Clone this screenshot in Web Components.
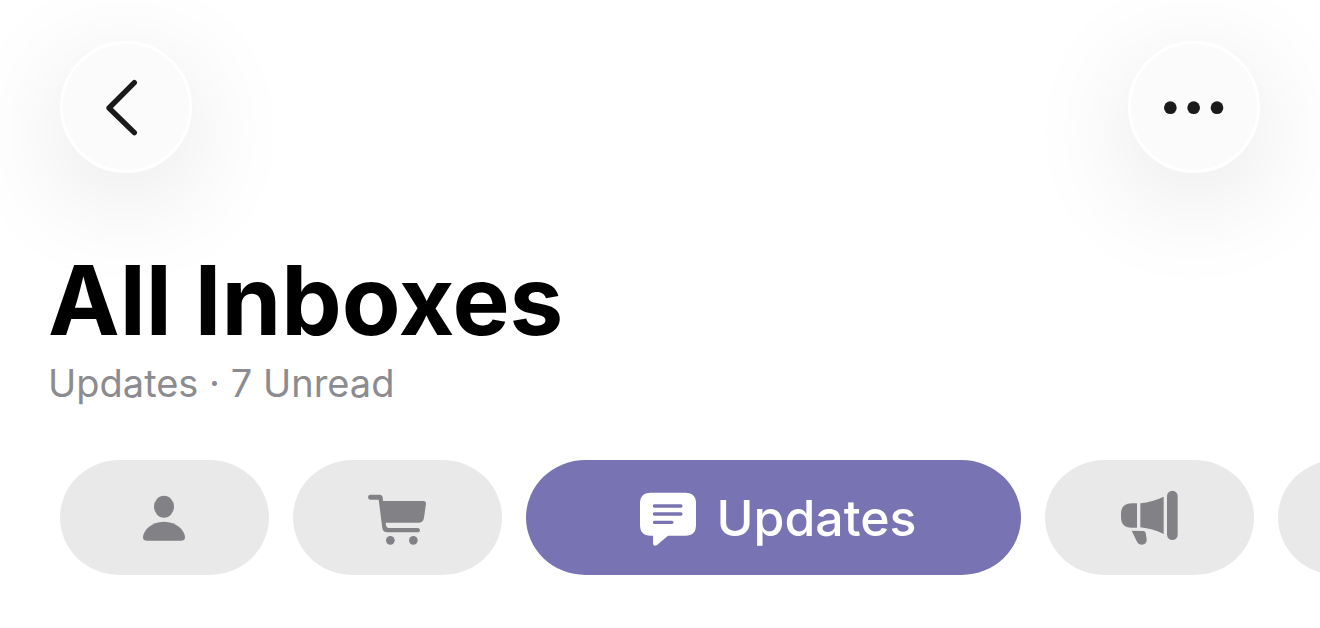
<!DOCTYPE html>
<html lang="en">
<head>
<meta charset="utf-8">
<meta name="viewport" content="width=device-width, initial-scale=1">
<title>All Inboxes</title>
<style>
  body { margin: 0; background: #fff; font-family: Inter, "Liberation Sans", sans-serif; overflow-x: hidden; }
</style>
</head>
<body>
<mail-screen>
  <glass-button slot="leading" label="Back" icon="back"></glass-button>
  <glass-button slot="trailing" label="More" icon="more"></glass-button>
  <mailbox-title slot="title">All Inboxes<span slot="detail">Updates · 7 Unread</span></mailbox-title>
  <category-pill slot="categories" label="Primary" icon="person"></category-pill>
  <category-pill slot="categories" label="Transactions" icon="cart"></category-pill>
  <category-pill slot="categories" label="Updates" icon="message" selected>Updates</category-pill>
  <category-pill slot="categories" label="Promotions" icon="megaphone"></category-pill>
  <category-pill slot="categories" label="All Mail" icon="tray"></category-pill>
</mail-screen>

<script>
const ICONS = {
  back: ['168 171 180 180', '<path d="M283 188 207 264 283 338" fill="none" stroke="currentColor" stroke-width="16" stroke-linecap="round" stroke-linejoin="round"/>'],
  more: ['252 171 180 180', '<circle cx="271" cy="263" r="19"/><circle cx="341" cy="263" r="19"/><circle cx="411" cy="263" r="19"/>'],
  person: ['45 25 180 180', '<ellipse cx="132" cy="81" rx="30" ry="33"/><path d="M79 183C72 183 69 179 69 173C69 153 94 126 132 126C170 126 195 153 195 173C195 179 192 183 185 183Z"/>'],
  cart: ['54 25 180 180', '<path d="M61 45H90Q97 45 98 53L99 64H220Q228 64 228 72L222 114Q220 129 205 129H107L108 137Q109 145 115 145H203C212 145 212 158 203 158H112Q99 158 97 145L86 60H61C52 60 52 45 61 45Z"/><circle cx="121" cy="182" r="13"/><circle cx="190" cy="182" r="13"/>'],
  message: ['54 25 180 180', '<path fill-rule="evenodd" d="M92 39H196Q228 39 228 71V136Q228 168 196 168H144L111 196Q99 202 99 190V168H92Q60 168 60 136V71Q60 39 92 39ZM103 74C97 74 97 84 103 84H183C189 84 189 74 183 74ZM103 98C97 98 97 108 103 108H183C189 108 189 98 183 98ZM103 123C97 123 97 133 103 133H156C162 133 162 123 156 123Z"/>'],
  megaphone: ['45 25 180 180', '<path d="M96 71V144H80Q48 144 48 112V103Q48 71 80 71ZM106 71Q143 67 176 51V163Q143 147 106 143ZM80 153L115 154Q121 154 122 160L125 178C127 198 103 200 96 186Z"/><rect x="186" y="33" width="32" height="148" rx="16"/>'],
  tray: ['0 0 180 180', '<path d="M30 60H150L170 110V150H10V110Z"/>']
};
const icon = name => {
  const [box, shape] = ICONS[name];
  return `<svg viewBox="${box}" aria-hidden="true">${shape}</svg>`;
};

customElements.define('mail-screen', class extends HTMLElement {
  constructor() {
    super();
    this.attachShadow({ mode: 'open' }).innerHTML = `
      <style>
        :host { display: block; }
        header { display: flex; justify-content: space-between; padding: 41px 60px 0; }
        .title { padding: 71px 48px 0; }
        nav { display: flex; gap: 24px; padding: 50px 0 52px 60px; overflow: hidden; }
      </style>
      <header><slot name="leading"></slot><slot name="trailing"></slot></header>
      <div class="title"><slot name="title"></slot></div>
      <nav aria-label="Categories"><slot name="categories"></slot></nav>`;
  }
});

customElements.define('glass-button', class extends HTMLElement {
  constructor() {
    super();
    this.attachShadow({ mode: 'open' }).innerHTML = `
      <style>
        :host { display: block; }
        button {
          display: grid; place-items: center; box-sizing: border-box;
          width: 132px; height: 132px; padding: 0; border: 3px solid #fff; border-radius: 50%;
          background: #fbfbfb; color: #1a1a1a; box-shadow: 0 24px 112px rgba(0, 0, 0, .11);
        }
        svg { width: 60px; height: 60px; overflow: visible; fill: currentColor; }
      </style>
      <button type="button" aria-label="${this.getAttribute('label')}">${icon(this.getAttribute('icon'))}</button>`;
  }
});

customElements.define('mailbox-title', class extends HTMLElement {
  constructor() {
    super();
    this.attachShadow({ mode: 'open' }).innerHTML = `
      <style>
        :host { display: block; position: relative; }
        h1 { margin: 0; font-size: 96px; line-height: 112px; font-weight: 700; color: #000; }
        p { margin: 0; font-size: 38px; line-height: 54px; color: #8c8c90; }
      </style>
      <h1><slot></slot></h1>
      <p><slot name="detail"></slot></p>`;
  }
});

customElements.define('category-pill', class extends HTMLElement {
  constructor() {
    super();
    this.attachShadow({ mode: 'open' }).innerHTML = `
      <style>
        :host { display: block; flex: 0 0 209px; }
        :host([selected]) { flex-basis: 495px; }
        button {
          display: flex; align-items: center; justify-content: center; gap: 18px;
          width: 100%; height: 115px; padding: 0; border: 0; border-radius: 60px / 58px;
          background: #e9e9e9; color: #828186;
          font: 500 50px/60px Inter, "Liberation Sans", sans-serif;
        }
        :host([selected]) button { background: #7873b3; color: #fff; padding-left: 8px; }
        svg { flex: none; width: 60px; height: 60px; fill: currentColor; }
        :host(:not([selected])) slot { display: none; }
      </style>
      <button type="button" aria-label="${this.getAttribute('label')}" aria-pressed="${this.hasAttribute('selected')}">${icon(this.getAttribute('icon'))}<slot></slot></button>`;
  }
});
</script>
</body>
</html>
